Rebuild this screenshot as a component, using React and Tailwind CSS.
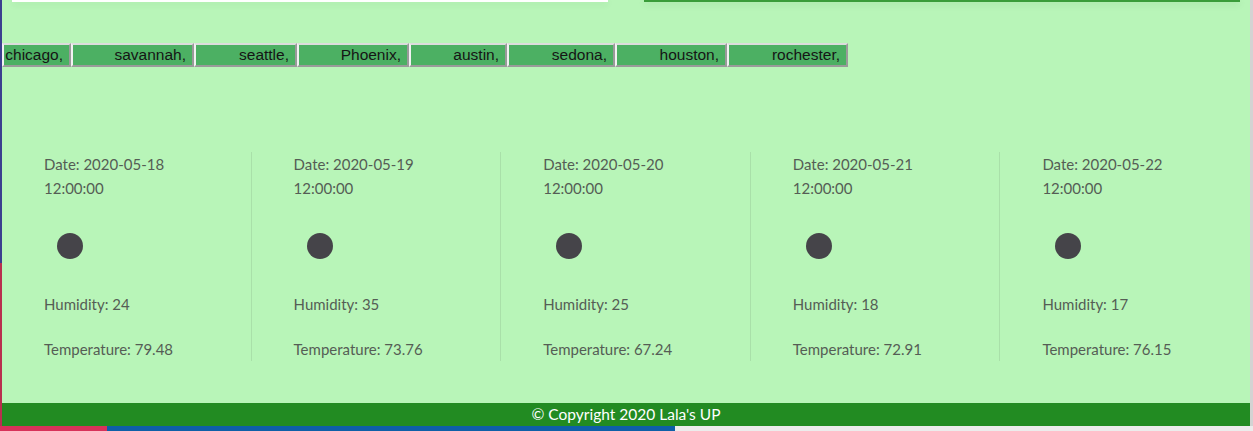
import React from "react";

const cities = [
  { name: "chicago,", w: "w-[69px]" },
  { name: "savannah,", w: "w-[123px]" },
  { name: "seattle,", w: "w-[103px]" },
  { name: "Phoenix,", w: "w-[112px]" },
  { name: "austin,", w: "w-[98px]" },
  { name: "sedona,", w: "w-[108px]" },
  { name: "houston,", w: "w-[112px]" },
  { name: "rochester,", w: "w-[121px]" },
];

const forecast = [
  { date: "2020-05-18", humidity: 24, temp: "79.48" },
  { date: "2020-05-19", humidity: 35, temp: "73.76" },
  { date: "2020-05-20", humidity: 25, temp: "67.24" },
  { date: "2020-05-21", humidity: 18, temp: "72.91" },
  { date: "2020-05-22", humidity: 17, temp: "76.15" },
];

const App = () => {
  return (
    <div className="w-[1253px] h-[431px] flex flex-col overflow-hidden bg-[#b8f5b8]">
      <div className="flex h-[426px]">
        {/* window edge */}
        <div className="w-[2px] flex flex-col">
          <div className="h-[263px] bg-[#3b3f8f]" />
          <div className="flex-1 bg-[#b8304f]" />
        </div>

        <div className="flex-1 flex flex-col">
          <div className="h-[43px] flex items-start">
            <div className="ml-[10px] w-[596px] h-[2px] bg-white shadow-[0_2px_7px_rgba(0,60,0,0.12)]" />
            <div className="ml-[36px] w-[596px] h-[2px] bg-[#3a9d3a] shadow-[0_2px_7px_rgba(0,60,0,0.15)]" />
          </div>

          <div className="flex h-[24px]">
            {cities.map((c) => (
              <button
                key={c.name}
                className={`${c.w} h-[24px] border-2 border-t-[#dcdcdc] border-l-[#f2f2f2] border-r-[#9a9a9a] border-b-[#9a9a9a] bg-[#4cb063] text-right pr-[6px] text-[15.5px] leading-[20px] text-[#151515] font-['Liberation_Sans',Arial,sans-serif] ${c.name === "chicago," ? "text-left pl-[1px]" : ""}`}
              >
                {c.name}
              </button>
            ))}
          </div>

          <div className="mt-[85px] h-[209px] grid grid-cols-5 font-['Lato',sans-serif] text-[15px] text-[#555d55]">
            {forecast.map((f, i) => (
              <div
                key={f.date}
                className={`pl-[42px] flex flex-col ${i < 4 ? "border-r border-[#a9e0a9]" : ""}`}
              >
                <p className="leading-[24px]">Date: {f.date}</p>
                <p className="leading-[24px]">12:00:00</p>
                <div className="mt-[33px] ml-[13px] w-[26px] h-[26px] rounded-full bg-[#454449]" />
                <p className="mt-[33px] leading-[24px]">Humidity: {f.humidity}</p>
                <p className="mt-[21px] leading-[24px]">Temperature: {f.temp}</p>
              </div>
            ))}
          </div>

          <div className="flex-1" />

          <footer className="h-[23px] bg-[#228b22] flex items-center justify-center text-white text-[15.5px] font-['Lato',sans-serif]">
            © Copyright 2020 Lala's UP
          </footer>
        </div>

        <div className="w-[3px] bg-[#d3d3d3]" />
      </div>

      {/* taskbar strip */}
      <div className="h-[5px] flex">
        <div className="w-[107px] bg-[#d8325a]" />
        <div className="w-[568px] bg-[#0e5fa8]" />
        <div className="flex-1 bg-[#ececec]" />
      </div>
    </div>
  );
};

export default App;
